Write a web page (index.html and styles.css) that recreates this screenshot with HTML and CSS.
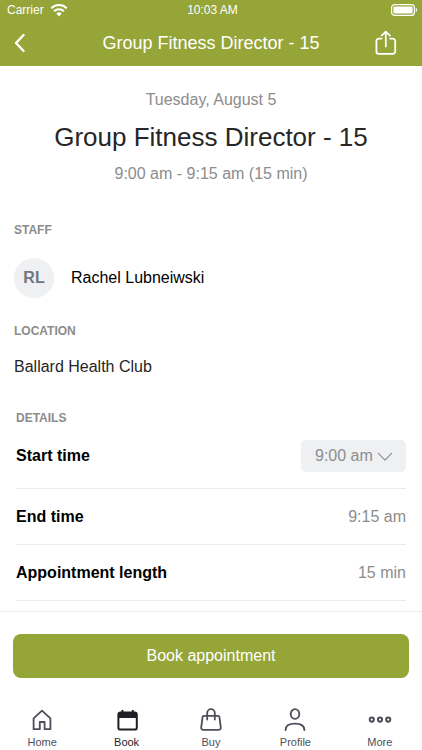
FILE: index.html
```html
<!DOCTYPE html>
<html lang="en">

<head>
    <meta charset="UTF-8">
    <meta name="viewport" content="width=device-width, initial-scale=1.0">
    <title>Group Fitness Director - 15</title>
    <link rel="stylesheet" href="styles.css">
</head>

<body>

    <header class="header">
        <div class="status">
            <div class="carrier">
                <span>Carrier</span>
                <svg width="18" height="14" viewBox="0 0 18 14" fill="none" stroke="#fff" stroke-width="2">
                    <path d="M1.2 5.2a11.2 11.2 0 0 1 15.6 0" />
                    <path d="M4 8.3a7.2 7.2 0 0 1 10 0" />
                    <path d="M6.3 10.6a4 4 0 0 1 5.4 0L9 13.4z" fill="#fff" stroke="none" />
                </svg>
            </div>
            <span>10:03 AM</span>
            <svg class="battery" width="28" height="14" viewBox="0 0 28 14">
                <rect x="1.6" y="1.6" width="22.8" height="10.8" rx="3" fill="none" stroke="#fff" stroke-width="1.2" />
                <rect x="3.4" y="3.4" width="19.2" height="7.2" rx="1.4" fill="#fff" />
                <path d="M25.8 4.8c1.6.6 1.6 3.8 0 4.4z" fill="#fff" />
            </svg>
        </div>
        <div class="navbar">
            <button class="icon-btn" type="button" aria-label="Back">
                <svg width="24" height="24" viewBox="0 0 24 24" fill="none" stroke="#fff" stroke-width="2.4" stroke-linecap="round" stroke-linejoin="round">
                    <path d="M15.6 4 8 12l7.6 8" />
                </svg>
            </button>
            <span class="navbar-title">Group Fitness Director - 15</span>
            <button class="icon-btn share" type="button" aria-label="Share">
                <svg width="24" height="26" viewBox="0 0 24 26" fill="none" stroke="#fff" stroke-width="1.8" stroke-linecap="round" stroke-linejoin="round">
                    <path d="M7.6 8.6H4.8a2.4 2.4 0 0 0-2.4 2.4v10.4a2.4 2.4 0 0 0 2.4 2.4h14a2.4 2.4 0 0 0 2.4-2.4V11a2.4 2.4 0 0 0-2.4-2.4H16" />
                    <path d="M11.8 16.4V1.8M7.6 5.6l4.2-4 4.2 4" />
                </svg>
            </button>
        </div>
    </header>

    <main class="content">
        <section class="summary">
            <p>Tuesday, August 5</p>
            <h1>Group Fitness Director - 15</h1>
            <p>9:00 am - 9:15 am (15 min)</p>
        </section>

        <section class="staff">
            <h2>STAFF</h2>
            <div class="person">
                <span class="avatar">RL</span>
                <span>Rachel Lubneiwski</span>
            </div>
        </section>

        <section class="location">
            <h2>LOCATION</h2>
            <p>Ballard Health Club</p>
        </section>

        <section class="details">
            <h2>DETAILS</h2>
            <div class="row row-start">
                <label for="start-time">Start time</label>
                <div class="picker">
                    <select id="start-time">
                        <option>9:00 am</option>
                    </select>
                    <svg class="chevron" width="16" height="10" viewBox="0 0 16 10" fill="none" stroke="#8c8d90" stroke-width="1.2" stroke-linecap="round" stroke-linejoin="round">
                        <path d="M1.4 1.4 8 8.2l6.6-6.8" />
                    </svg>
                </div>
            </div>
            <div class="row">
                <span class="name">End time</span>
                <span class="value">9:15 am</span>
            </div>
            <div class="row">
                <span class="name">Appointment length</span>
                <span class="value">15 min</span>
            </div>
        </section>
    </main>

    <div class="action">
        <button class="book-btn" type="button">Book appointment</button>
    </div>

    <nav class="tabs">
        <a class="tab" href="#home">
            <svg width="24" height="24" viewBox="0 0 24 24" fill="none" stroke="currentColor" stroke-width="1.8" stroke-linejoin="round">
                <path d="M3.6 10.4 12 2.6l8.4 7.8v10.8h-5.8V14H9.8v7.2H3.6z" />
            </svg>
            <span>Home</span>
        </a>
        <a class="tab active" href="#book">
            <svg width="24" height="24" viewBox="0 0 24 24" fill="none" stroke="currentColor" stroke-width="2">
                <rect x="3.4" y="4.6" width="18.4" height="17" rx="2.2" />
                <path d="M3.4 5h18.4v5H3.4z" fill="currentColor" stroke="none" />
                <path d="M7.4 2.8v2M17.8 2.8v2" stroke-linecap="round" />
            </svg>
            <span>Book</span>
        </a>
        <a class="tab" href="#buy">
            <svg width="24" height="24" viewBox="0 0 24 24" fill="none" stroke="currentColor" stroke-width="1.8" stroke-linecap="round" stroke-linejoin="round">
                <path d="M4.8 7.8h14.4a1.2 1.2 0 0 1 1.2 1l1.4 10.8a2 2 0 0 1-2 2.2H4.2a2 2 0 0 1-2-2.2L3.6 8.8a1.2 1.2 0 0 1 1.2-1z" />
                <path d="M8.2 11.6V5a3.8 3.8 0 0 1 7.6 0v6.6" />
            </svg>
            <span>Buy</span>
        </a>
        <a class="tab" href="#profile">
            <svg width="24" height="24" viewBox="0 0 24 24" fill="none" stroke="currentColor" stroke-width="1.9" stroke-linecap="round">
                <ellipse cx="12" cy="6" rx="4.3" ry="4.9" />
                <path d="M2.6 22c0-4.4 3.8-6.4 9.4-6.4s9.4 2 9.4 6.4" />
            </svg>
            <span>Profile</span>
        </a>
        <a class="tab" href="#more">
            <svg width="24" height="24" viewBox="0 0 24 24" fill="none" stroke="currentColor" stroke-width="2">
                <circle cx="3.8" cy="11.6" r="2.1" />
                <circle cx="12" cy="11.6" r="2.1" />
                <circle cx="20.2" cy="11.6" r="2.1" />
            </svg>
            <span>More</span>
        </a>
    </nav>

</body>

</html>
```

FILE: styles.css
```css
* {
    box-sizing: border-box;
}

body {
    display: flex;
    flex-direction: column;
    min-height: 100vh;
    margin: 0;
    font-family: "Liberation Sans", Arial, sans-serif;
    font-size: 16px;
    line-height: 20px;
    color: #262626;
    background: #fff;
}

h1,
h2,
p {
    margin: 0;
}

h2 {
    font-size: 12px;
    line-height: 16px;
    color: #8c8c8c;
}

button,
select {
    border: 0;
    font: inherit;
}

svg {
    display: block;
}

.header {
    color: #fff;
    background: #95a538;
}

.status {
    display: grid;
    grid-template-columns: 1fr auto 1fr;
    align-items: center;
    height: 20px;
    padding: 0 4px 0 7px;
    font-size: 12px;
}

.carrier {
    display: flex;
    align-items: center;
    gap: 6px;
}

.battery {
    justify-self: end;
}

.navbar {
    display: grid;
    grid-template-columns: 1fr auto 1fr;
    align-items: center;
    height: 46px;
    padding: 0 8px;
}

.navbar-title {
    font-size: 18px;
}

.icon-btn {
    justify-self: start;
    padding: 0;
    background: none;
}

.share {
    justify-self: end;
    margin-right: 16px;
}

.content {
    flex: 1;
    padding: 24px 14px 10px;
}

.summary {
    display: flex;
    flex-direction: column;
    gap: 11px;
    text-align: center;
    color: #8c8c8c;
}

.summary h1 {
    font-size: 26px;
    font-weight: normal;
    line-height: 32px;
    color: #262626;
}

.staff {
    margin-top: 38px;
}

.person {
    display: flex;
    align-items: center;
    gap: 17px;
    margin-top: 20px;
    color: #000;
}

.avatar {
    display: flex;
    align-items: center;
    justify-content: center;
    width: 40px;
    height: 40px;
    border-radius: 50%;
    font-weight: bold;
    color: #74757c;
    background: #eff0f2;
}

.location {
    margin-top: 25px;
}

.location p {
    margin-top: 18px;
}

.details {
    margin-top: 33px;
    padding: 0 2px;
}

.row {
    display: flex;
    align-items: center;
    justify-content: space-between;
    padding: 18px 0 17px;
    border-bottom: 1px solid #ebebeb;
}

.row-start {
    padding: 14px 0 16px;
}

.row label,
.name {
    font-weight: bold;
    color: #000;
}

.value {
    color: #8c8c8c;
}

.picker {
    position: relative;
}

.picker select {
    appearance: none;
    height: 32px;
    padding: 0 33px 0 14px;
    border-radius: 5px;
    color: #8c8d90;
    background: #eff0f2;
}

/* sits over the select, in place of its own arrow */
.chevron {
    position: absolute;
    top: 12px;
    right: 13px;
    pointer-events: none;
}

.action {
    padding: 22px 13px 12px;
    border-top: 1px solid #ebebeb;
}

.book-btn {
    width: 100%;
    height: 44px;
    border-radius: 8px;
    color: #fff;
    background: #95a538;
}

.tabs {
    display: grid;
    grid-template-columns: repeat(5, 1fr);
    padding: 18px 0 2px;
}

.tab {
    display: flex;
    flex-direction: column;
    align-items: center;
    gap: 4px;
    font-size: 11px;
    line-height: 12px;
    text-decoration: none;
    color: #4d4e59;
}

.active {
    color: #1f1f26;
}
```
